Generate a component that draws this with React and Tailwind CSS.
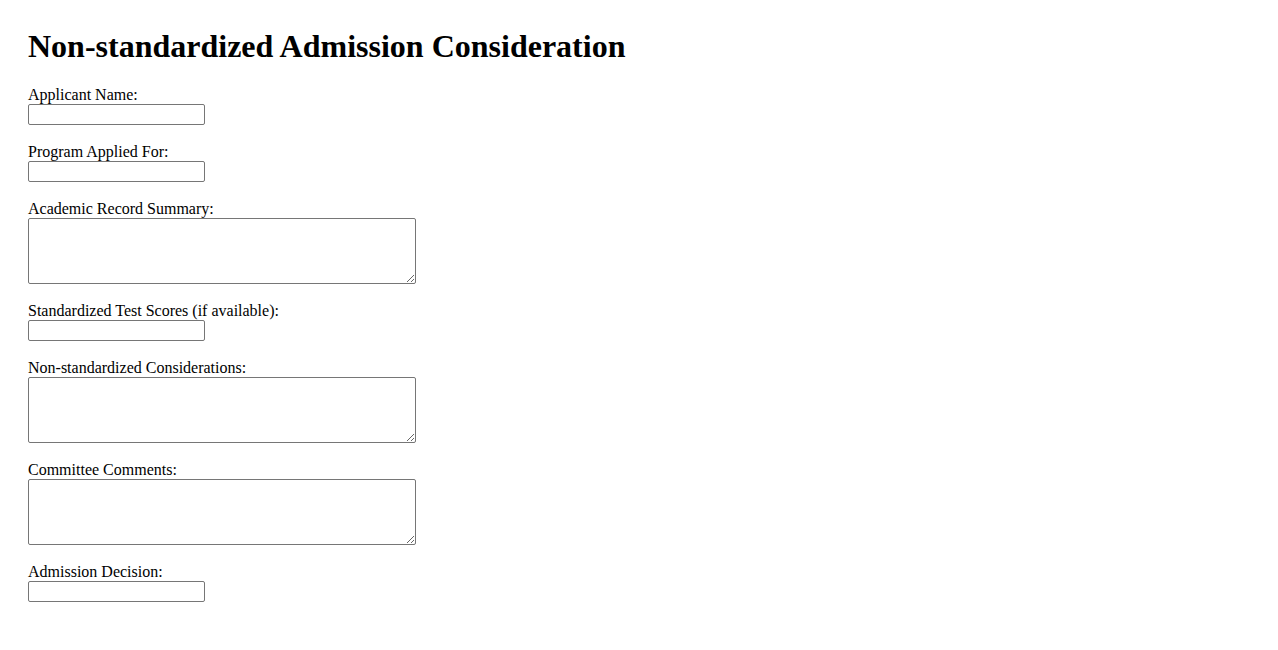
import React from "react";

function Field({ label, area }) {
  return (
    <div className="mb-[18px]">
      <label className="block text-[16px] leading-[18px]">{label}</label>
      {area ? (
        <textarea className="block w-[388px] h-[66px] border border-[#767676] rounded-[2px] bg-white resize" />
      ) : (
        <input type="text" className="block w-[177px] h-[21px] border border-[#767676] rounded-[2px] bg-white" />
      )}
    </div>
  );
}

export default function App() {
  return (
    <div className="bg-white min-h-[650px] px-[28px] pt-[28px] text-black" style={{ fontFamily: '"Liberation Serif", "Times New Roman", serif' }}>
      <h1 className="text-[32px] font-bold leading-[37px] mb-[21px]">Non-standardized Admission Consideration</h1>
      <form>
        <Field label="Applicant Name:" />
        <Field label="Program Applied For:" />
        <Field label="Academic Record Summary:" area />
        <Field label="Standardized Test Scores (if available):" />
        <Field label="Non-standardized Considerations:" area />
        <Field label="Committee Comments:" area />
        <Field label="Admission Decision:" />
      </form>
    </div>
  );
}
